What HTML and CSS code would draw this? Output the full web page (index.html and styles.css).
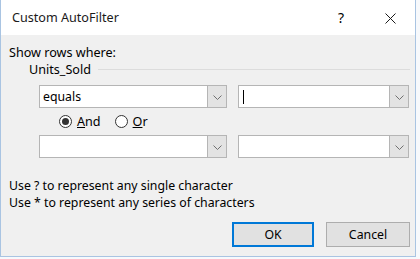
FILE: index.html
```html
<!DOCTYPE html>
<html>
<head>
<meta charset="utf-8">
<link rel="stylesheet" href="styles.css">
</head>
<body>
<div class="window">
  <div class="titlebar">
    <span class="title">Custom AutoFilter</span>
    <span class="help">?</span>
    <span class="close"><svg width="13" height="11" viewBox="0 0 13 11"><path d="M1.5 0.5 L11.5 10.5 M11.5 0.5 L1.5 10.5" stroke="#1a1a1a" stroke-width="1" fill="none"/></svg></span>
  </div>
  <div class="content">
    <div class="label">Show rows where:</div>
    <div class="group-head"><span>Units_Sold</span><span class="rule"></span></div>
    <div class="combo-row">
      <div class="combo combo-left"><span class="value">equals</span><span class="drop"><svg width="9" height="5" viewBox="0 0 9 5"><path d="M0.5 0.5 L4.5 4.5 L8.5 0.5" stroke="#707070" stroke-width="1" fill="none"/></svg></span></div>
      <div class="combo combo-right"><span class="value"><span class="caret"></span></span><span class="drop"><svg width="9" height="5" viewBox="0 0 9 5"><path d="M0.5 0.5 L4.5 4.5 L8.5 0.5" stroke="#707070" stroke-width="1" fill="none"/></svg></span></div>
    </div>
    <div class="radios">
      <span class="radio checked"></span><span class="radio-label"><u>A</u>nd</span>
      <span class="radio"></span><span class="radio-label"><u>O</u>r</span>
    </div>
    <div class="combo-row">
      <div class="combo combo-left"><span class="value"></span><span class="drop"><svg width="9" height="5" viewBox="0 0 9 5"><path d="M0.5 0.5 L4.5 4.5 L8.5 0.5" stroke="#707070" stroke-width="1" fill="none"/></svg></span></div>
      <div class="combo combo-right"><span class="value"></span><span class="drop"><svg width="9" height="5" viewBox="0 0 9 5"><path d="M0.5 0.5 L4.5 4.5 L8.5 0.5" stroke="#707070" stroke-width="1" fill="none"/></svg></span></div>
    </div>
    <div class="hint first">Use ? to represent any single character</div>
    <div class="hint">Use * to represent any series of characters</div>
    <div class="buttons">
      <div class="btn default">OK</div>
      <div class="btn">Cancel</div>
    </div>
  </div>
</div>
</body>
</html>
```
FILE: styles.css
```css
html, body {
  margin: 0;
  padding: 0;
  background: #f7f9fc;
}
body {
  font-family: "Noto Sans", "Open Sans", sans-serif;
  font-size: 12.3px;
  color: #000;
}
.window {
  width: 414px;
  height: 256px;
  border: 1px solid #a9c4e2;
  border-top: none;
  background: #f0f0f0;
  display: flex;
  flex-direction: column;
}
.titlebar {
  height: 35px;
  background: #fff;
  display: flex;
  align-items: center;
  padding-left: 11px;
}
.title {
  font-size: 12.6px;
  flex: 1;
  color: #1a1a1a;
}
.help {
  font-size: 14px;
  width: 46px;
}
.close {
  width: 31px;
  display: flex;
  padding-top: 2px;
}
.content {
  padding: 0 5px 0 8px;
  display: flex;
  flex-direction: column;
}
.label {
  margin-top: 9px;
  line-height: 17px;
  font-size: 12.6px;
}
.group-head {
  display: flex;
  align-items: center;
  padding-left: 20px;
  line-height: 17px;
  font-size: 12.6px;
}
.rule {
  flex: 1;
  height: 0;
  border-top: 1px solid #dcdcdc;
  margin-left: 7px;
}
.combo-row {
  display: flex;
  margin-left: 30px;
  gap: 11px;
}
.group-head + .combo-row {
  margin-top: 7px;
}
.combo {
  height: 23px;
  box-sizing: border-box;
  border: 1px solid #b5b5b5;
  background: #fff;
  display: flex;
}
.combo-left { width: 188px; }
.combo-right { width: 171px; }
.value {
  flex: 1;
  display: flex;
  align-items: center;
  padding-left: 3px;
  line-height: 21px;
}
.caret {
  width: 1px;
  height: 14px;
  background: #000;
  margin-left: 1px;
}
.drop {
  width: 19px;
  box-sizing: border-box;
  border-left: 1px solid #b5b5b5;
  background: #e3e3e3;
  display: flex;
  align-items: center;
  justify-content: center;
  padding-top: 1px;
}
.radios {
  height: 27px;
  display: flex;
  align-items: center;
  margin-left: 50px;
  font-size: 12.6px;
}
.radio {
  width: 13px;
  height: 13px;
  box-sizing: border-box;
  border: 1px solid #333;
  border-radius: 50%;
  background: #fff;
  display: flex;
  align-items: center;
  justify-content: center;
}
.radio.checked::after {
  content: "";
  width: 7px;
  height: 7px;
  border-radius: 50%;
  background: #333;
}
.radio-label {
  margin-left: 5px;
  margin-right: 14px;
}
.hint {
  line-height: 17px;
}
.hint.first {
  margin-top: 19px;
}
.buttons {
  margin-top: 11px;
  display: flex;
  justify-content: flex-end;
  gap: 12px;
}
.btn {
  width: 84px;
  height: 25px;
  box-sizing: border-box;
  border: 1px solid #adadad;
  background: #e1e1e1;
  display: flex;
  align-items: center;
  justify-content: center;
}
.btn.default {
  width: 82px;
  border: 2px solid #0078d7;
}
```
